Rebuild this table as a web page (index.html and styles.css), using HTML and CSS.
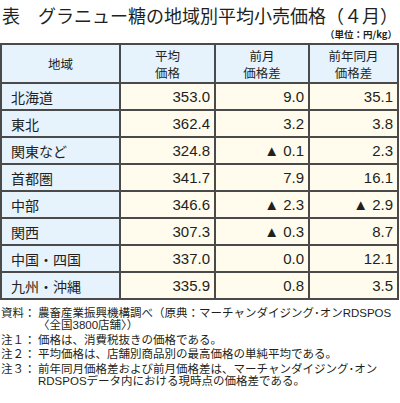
FILE: index.html
```html
<!DOCTYPE html>
<html lang="ja">
<head>
    <meta charset="UTF-8">
    <meta name="viewport" content="width=device-width, initial-scale=1.0">
    <title>グラニュー糖の地域別平均小売価格</title>
    <link rel="stylesheet" href="styles.css">
</head>
<body>
    <h1 class="title">表　グラニュー糖の地域別平均小売価格（４月）</h1>
    <p class="unit">（単位：円/kg）</p>

    <table class="price-table">
        <thead>
            <tr>
                <th>地域</th>
                <th><span class="line">平均</span><span class="line">価格</span></th>
                <th><span class="line">前月</span><span class="line">価格差</span></th>
                <th><span class="line">前年同月</span><span class="line">価格差</span></th>
            </tr>
        </thead>
        <tbody>
            <tr><td class="region">北海道</td><td>353.0</td><td>9.0</td><td>35.1</td></tr>
            <tr><td class="region">東北</td><td>362.4</td><td>3.2</td><td>3.8</td></tr>
            <tr><td class="region">関東など</td><td>324.8</td><td>▲ 0.1</td><td>2.3</td></tr>
            <tr><td class="region">首都圏</td><td>341.7</td><td>7.9</td><td>16.1</td></tr>
            <tr><td class="region">中部</td><td>346.6</td><td>▲ 2.3</td><td>▲ 2.9</td></tr>
            <tr><td class="region">関西</td><td>307.3</td><td>▲ 0.3</td><td>8.7</td></tr>
            <tr><td class="region">中国・四国</td><td>337.0</td><td>0.0</td><td>12.1</td></tr>
            <tr><td class="region">九州・沖縄</td><td>335.9</td><td>0.8</td><td>3.5</td></tr>
        </tbody>
    </table>

    <div class="notes">
        <div class="note"><span class="label">資料：</span><span class="body">農畜産業振興機構調べ（原典：マーチャンダイジング･オンRDSPOS<br>〈全国3800店舗〉）</span></div>
        <div class="note"><span class="label">注１：</span><span class="body">価格は、消費税抜きの価格である。</span></div>
        <div class="note"><span class="label">注２：</span><span class="body">平均価格は、店舗別商品別の最高価格の単純平均である。</span></div>
        <div class="note"><span class="label">注３：</span><span class="body">前年同月価格差および前月価格差は、マーチャンダイジング･オン<br>RDSPOSデータ内における現時点の価格差である。</span></div>
    </div>
</body>
</html>
```

FILE: styles.css
```css
body {
    font-family: "Liberation Sans", "Noto Sans CJK JP", sans-serif;
    margin: 0;
    padding: 0;
    background-color: #fff;
    color: #231f20;
    width: 400px;
}
.title {
    font-family: "Noto Sans CJK JP", sans-serif;
    font-size: 18px;
    font-weight: normal;
    line-height: 22px;
    margin: 4px 0 0 2px;
    white-space: nowrap;
}
.unit {
    font-family: "Noto Sans CJK JP", sans-serif;
    font-size: 9.5px;
    font-weight: bold;
    line-height: 12px;
    text-align: right;
    margin: 2px 3px 0 0;
}
.price-table {
    width: 399px;
    margin-top: 3px;
    border-collapse: collapse;
    table-layout: fixed;
}
.price-table th, .price-table td {
    border: 2px solid #4a4a4a;
    padding: 0;
}
.price-table th {
    background-color: #e6f2fc;
    font-family: "Noto Sans CJK JP", sans-serif;
    font-size: 12.5px;
    font-weight: normal;
    line-height: 17px;
    text-align: center;
    height: 37px;
}
.price-table th .line {
    display: block;
    line-height: 17px;
}
.price-table th:nth-child(1) { width: 117px; }
.price-table th:nth-child(2) { width: 93px; }
.price-table th:nth-child(3) { width: 92px; }
.price-table td {
    background-color: #fffcee;
    font-size: 15px;
    height: 25px;
    text-align: right;
    padding-right: 4px;
}
.price-table td.region {
    background-color: #e6f2fc;
    font-family: "Noto Sans CJK JP", sans-serif;
    font-size: 14px;
    text-align: left;
    padding-left: 9px;
    padding-right: 0;
}
.notes {
    margin-top: 7px;
    font-family: "Liberation Sans", "Noto Sans CJK JP", sans-serif;
    font-size: 11.5px;
    line-height: 12px;
}
.note {
    display: flex;
    white-space: nowrap;
    margin-left: 1px;
    margin-bottom: 2.5px;
}
.note .label {
    width: 37px;
    flex-shrink: 0;
}
```
